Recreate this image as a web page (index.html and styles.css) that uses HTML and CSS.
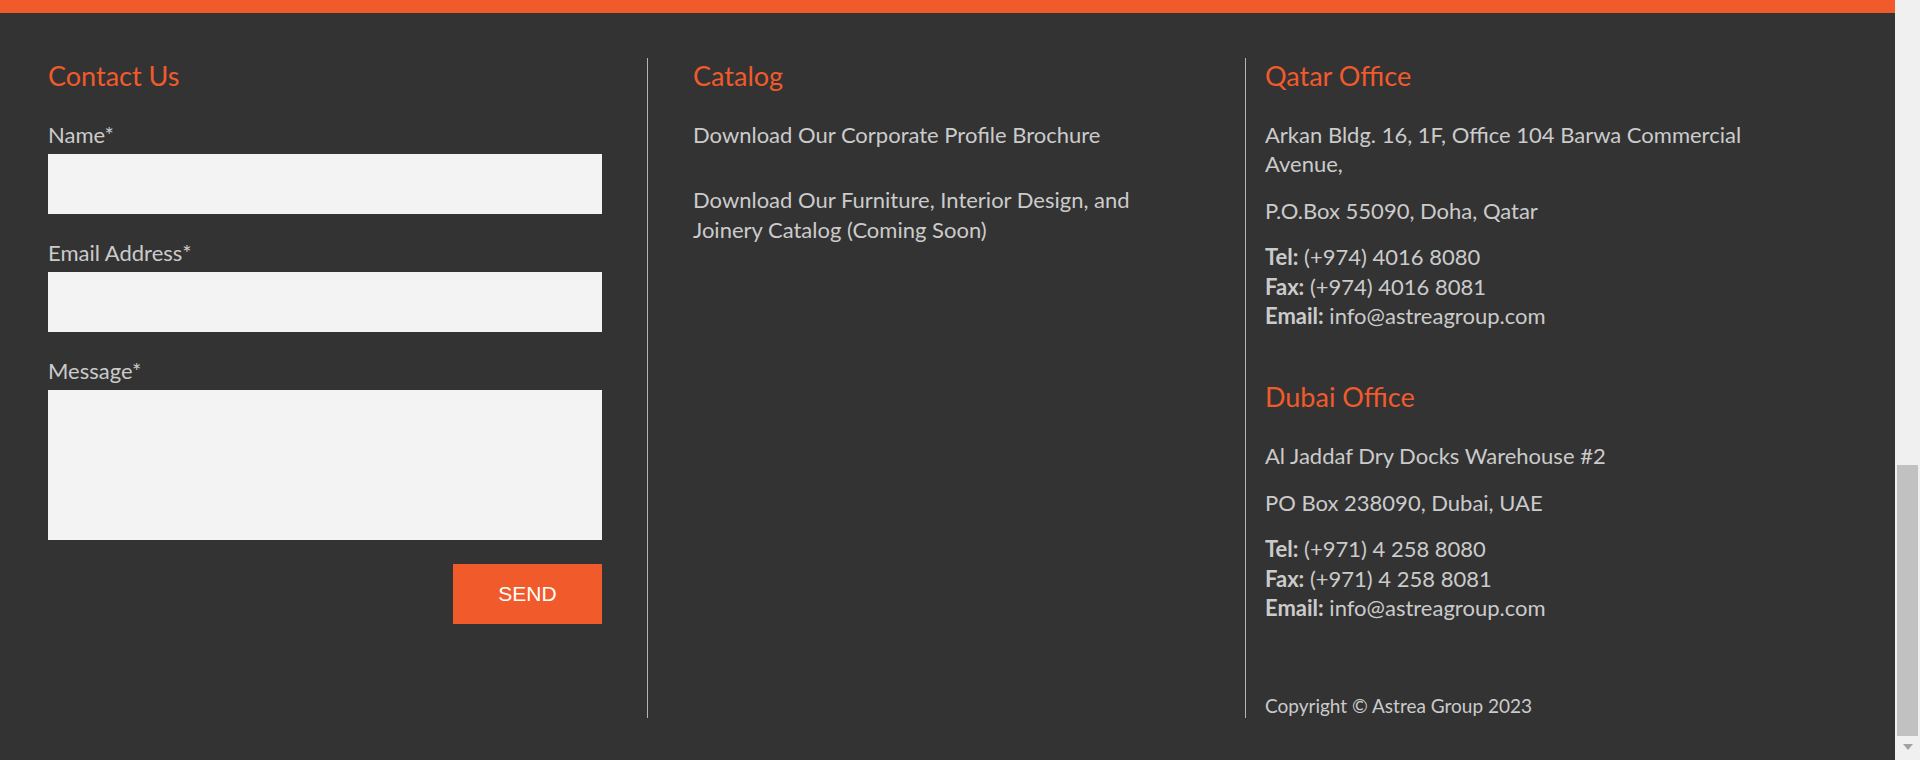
FILE: index.html
```html
<!DOCTYPE html>
<html lang="en">
<head>
<meta charset="utf-8">
<title>Astrea Group - Contact</title>
<link rel="stylesheet" href="styles.css">
</head>
<body>
<div class="page">
  <div class="topbar"></div>
  <footer class="footer">
    <section class="col col-contact">
      <h3 class="col-title">Contact Us</h3>
      <form class="form">
        <label class="field">
          <span class="field-label">Name*</span>
          <input class="field-input" type="text">
        </label>
        <label class="field">
          <span class="field-label">Email Address*</span>
          <input class="field-input" type="email">
        </label>
        <label class="field">
          <span class="field-label">Message*</span>
          <textarea class="field-input field-area"></textarea>
        </label>
        <div class="form-actions">
          <button class="send-btn" type="button">SEND</button>
        </div>
      </form>
    </section>
    <section class="col col-catalog">
      <h3 class="col-title">Catalog</h3>
      <a class="catalog-link" href="#">Download Our Corporate Profile Brochure</a>
      <a class="catalog-link" href="#">Download Our Furniture, Interior Design, and Joinery Catalog (Coming Soon)</a>
    </section>
    <section class="col col-offices">
      <div class="office">
        <h3 class="col-title">Qatar Office</h3>
        <p class="office-line">Arkan Bldg. 16, 1F, Office 104 Barwa Commercial Avenue,</p>
        <p class="office-line">P.O.Box 55090, Doha, Qatar</p>
        <p class="office-line"><b>Tel:</b> (+974) 4016 8080<br><b>Fax:</b> (+974) 4016 8081<br><b>Email:</b> info@astreagroup.com</p>
      </div>
      <div class="office office-second">
        <h3 class="col-title">Dubai Office</h3>
        <p class="office-line">Al Jaddaf Dry Docks Warehouse #2</p>
        <p class="office-line">PO Box 238090, Dubai, UAE</p>
        <p class="office-line"><b>Tel:</b> (+971) 4 258 8080<br><b>Fax:</b> (+971) 4 258 8081<br><b>Email:</b> info@astreagroup.com</p>
      </div>
      <p class="copyright">Copyright © Astrea Group 2023</p>
    </section>
  </footer>
</div>
<div class="scrollbar">
  <div class="scroll-thumb"></div>
  <div class="scroll-arrow"></div>
</div>
</body>
</html>
```
FILE: styles.css
```css
html, body {
  margin: 0;
  padding: 0;
}

body {
  display: flex;
  width: 1920px;
  height: 760px;
  overflow: hidden;
  background: #333333;
  font-family: Lato, "Open Sans", sans-serif;
  color: #cbcbcb;
}

.page {
  flex: 1;
  min-width: 0;
}

.topbar {
  height: 13px;
  background: #f15a2b;
}

.footer {
  display: grid;
  grid-template-columns: 599px 598px 1fr;
  padding: 45px 0 0 48px;
}

.col {
  display: flex;
  flex-direction: column;
}

.col-contact {
  padding-right: 45px;
}

.col-catalog {
  border-left: 1px solid #b5b5b5;
  padding-left: 45px;
  padding-right: 72px;
}

.col-offices {
  border-left: 1px solid #b5b5b5;
  padding-left: 19px;
  padding-right: 120px;
}

.col-title {
  margin: 0 0 26px;
  font-size: 27px;
  line-height: 36px;
  font-weight: 400;
  color: #f15a2b;
}

.form {
  display: flex;
  flex-direction: column;
}

.field {
  display: flex;
  flex-direction: column;
  margin-bottom: 23.5px;
}

.field-label {
  font-size: 22px;
  line-height: 29.4px;
  margin-bottom: 5px;
}

.field-input {
  display: block;
  height: 60px;
  border: none;
  outline: none;
  margin: 0;
  padding: 0 12px;
  background: #f3f3f3;
  box-sizing: border-box;
  font-family: inherit;
  font-size: 18px;
  resize: none;
}

.field-area {
  height: 150px;
}

.form-actions {
  display: flex;
  justify-content: flex-end;
}

.send-btn {
  width: 149px;
  height: 60px;
  border: none;
  background: #f15a2b;
  color: #ffffff;
  font-family: "Liberation Sans", Arial, sans-serif;
  font-size: 21px;
  padding: 0;
  cursor: pointer;
}

.catalog-link {
  display: block;
  font-size: 22px;
  line-height: 29.4px;
  color: #cbcbcb;
  text-decoration: none;
  margin-bottom: 36px;
}

.office-line {
  margin: 0 0 17px;
  font-size: 22px;
  line-height: 29.4px;
}

.office-line:last-child {
  margin-bottom: 0;
}

.office-line b {
  font-weight: 700;
}

.office-second {
  margin-top: 49px;
}

.copyright {
  margin: 71px 0 0;
  font-size: 19px;
  line-height: 25px;
}

.scrollbar {
  width: 25px;
  flex: none;
  display: flex;
  flex-direction: column;
  align-items: center;
  background: #f0f0f0;
  padding-top: 465px;
  box-sizing: border-box;
}

.scroll-thumb {
  width: 21px;
  height: 271px;
  background: #c1c1c1;
}

.scroll-arrow {
  margin-top: 8px;
  width: 0;
  height: 0;
  border-left: 5.5px solid transparent;
  border-right: 5.5px solid transparent;
  border-top: 6px solid #a3a3a3;
}
```
